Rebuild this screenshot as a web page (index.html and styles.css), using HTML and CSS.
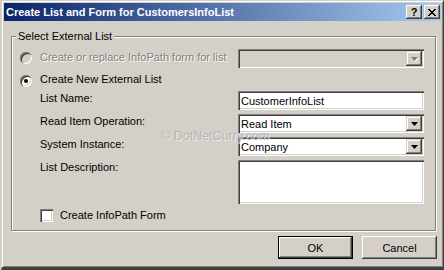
FILE: index.html
```html
<!DOCTYPE html>
<html lang="en">

<head>
    <meta charset="UTF-8">
    <title>Create List and Form for CustomersInfoList</title>
    <link rel="stylesheet" href="styles.css">
</head>

<body>
    <div class="window">
        <div class="titlebar">
            <span class="title">Create List and Form for CustomersInfoList</span>
            <div class="caption-buttons">
                <span class="cap-btn">?</span>
                <span class="cap-btn">
                    <svg width="8" height="7" viewBox="0 0 8 7" shape-rendering="crispEdges">
                        <path d="M0 0h2v1h-2zM6 0h2v1h-2zM1 1h2v1h-2zM5 1h2v1h-2zM2 2h4v1h-4zM3 3h2v1h-2zM2 4h4v1h-4zM1 5h2v1h-2zM5 5h2v1h-2zM0 6h2v1h-2zM6 6h2v1h-2z" fill="#000"/>
                    </svg>
                </span>
            </div>
        </div>

        <div class="content">
            <fieldset class="group">
                <legend>Select External List</legend>
                <div class="form">
                    <span class="radio disabled"></span>
                    <span class="label disabled-text first">Create or replace InfoPath form for list</span>
                    <div class="field combo readonly">
                        <span class="value"></span>
                        <span class="drop disabled-arrow"><svg width="7" height="4" viewBox="0 0 7 4"><path d="M0 0h7L3.5 4z" fill="#808080"/></svg></span>
                    </div>

                    <span class="radio checked"></span>
                    <span class="label wide">Create New External List</span>

                    <span></span>
                    <span class="label">List Name:</span>
                    <div class="field"><span class="value">CustomerInfoList</span></div>

                    <span></span>
                    <span class="label">Read Item Operation:</span>
                    <div class="field combo">
                        <span class="value">Read Item</span>
                        <span class="drop"><svg width="7" height="4" viewBox="0 0 7 4"><path d="M0 0h7L3.5 4z" fill="#000"/></svg></span>
                    </div>

                    <span></span>
                    <span class="label">System Instance:</span>
                    <div class="field combo">
                        <span class="value">Company</span>
                        <span class="drop"><svg width="7" height="4" viewBox="0 0 7 4"><path d="M0 0h7L3.5 4z" fill="#000"/></svg></span>
                    </div>

                    <span></span>
                    <span class="label">List Description:</span>
                    <div class="field"></div>

                    <span></span>
                    <label class="check-row"><span class="checkbox"></span>Create InfoPath Form</label>
                </div>
            </fieldset>

            <div class="actions">
                <button class="btn default">OK</button>
                <button class="btn">Cancel</button>
            </div>
        </div>

        <div class="watermark">© DotNetCurry.com</div>
    </div>
</body>

</html>
```

FILE: styles.css
```css
html, body {
    margin: 0;
    padding: 0;
}
body {
    width: 444px;
    height: 270px;
    overflow: hidden;
    background-color: #d4d0c8;
    font-family: "Liberation Sans", Arial, sans-serif;
    font-size: 11px;
    color: #000;
}
.window {
    position: relative;
    box-sizing: border-box;
    width: 443px;
    height: 270px;
    margin-left: 1px;
    padding: 2px 2px 0 2px;
    border-top: 1px solid #d4d0c8;
    border-left: 1px solid #d4d0c8;
    border-right: 1px solid #404040;
    border-bottom: 3px solid #404040;
    box-shadow: inset 1px 1px 0 #fff, inset -1px -1px 0 #808080;
    background-color: #d4d0c8;
}
.titlebar {
    display: flex;
    align-items: center;
    justify-content: space-between;
    height: 18px;
    padding: 0 1px 0 2px;
    background: linear-gradient(90deg, #0a246a, #a6caf0);
}
.title {
    color: #fff;
    font-weight: bold;
    line-height: 18px;
}
.caption-buttons {
    display: flex;
    gap: 2px;
}
.cap-btn {
    display: flex;
    align-items: center;
    justify-content: center;
    box-sizing: border-box;
    width: 16px;
    height: 14px;
    background-color: #d4d0c8;
    box-shadow: inset -1px -1px 0 #404040, inset 1px 1px 0 #fff, inset -2px -2px 0 #808080, inset 2px 2px 0 #d4d0c8;
    font-weight: bold;
    font-size: 11px;
    line-height: 14px;
}
.content {
    padding: 8px 4px 0 7px;
}
.group {
    margin: 0 1px 0 0;
    padding: 0;
    min-width: 0;
    border: 1px solid #808080;
    box-shadow: 1px 1px 0 #fff, inset 1px 1px 0 #fff;
}
.group legend {
    margin-left: 4px;
    padding: 0 2px;
    line-height: 14px;
    background-color: #d4d0c8;
}
.form {
    display: grid;
    grid-template-columns: 20px 198px 186px;
    grid-template-rows: 19px 15px 19px 19px 19px 44px 14px;
    row-gap: 4px;
    padding: 6px 10px 8px 8px;
}
.label {
    line-height: 14px;
    white-space: nowrap;
}
.label.first {
    margin-top: 1px;
}
.label.wide {
    grid-column: 2 / 4;
}
.disabled-text {
    color: #808080;
    text-shadow: 1px 1px 0 #fff;
}
.radio {
    position: relative;
    width: 12px;
    height: 12px;
    margin-top: 3px;
    border-radius: 50%;
    background-color: #fff;
    box-shadow: inset 1px 1px 0 #808080, inset 2px 2px 0 #404040, inset -1px -1px 0 #fff, inset -2px -2px 0 #d4d0c8;
}
.radio.disabled {
    background-color: #d4d0c8;
}
.radio.checked::after {
    content: "";
    position: absolute;
    left: 4px;
    top: 4px;
    width: 4px;
    height: 4px;
    border-radius: 50%;
    background-color: #000;
}
.field {
    display: flex;
    align-items: center;
    box-sizing: border-box;
    padding: 2px;
    background-color: #fff;
    box-shadow: inset 1px 1px 0 #808080, inset 2px 2px 0 #404040, inset -1px -1px 0 #fff, inset -2px -2px 0 #d4d0c8;
}
.field.readonly {
    background-color: #d4d0c8;
}
.field .value {
    flex: 1;
    padding: 2px 0 0 1px;
    line-height: 13px;
    white-space: nowrap;
}
.drop {
    display: flex;
    align-items: center;
    justify-content: center;
    width: 16px;
    height: 15px;
    background-color: #d4d0c8;
    box-shadow: inset -1px -1px 0 #404040, inset 1px 1px 0 #d4d0c8, inset -2px -2px 0 #808080, inset 2px 2px 0 #fff;
}
.disabled-arrow svg {
    filter: drop-shadow(1px 1px 0 #fff);
}
.check-row {
    display: flex;
    align-items: center;
    gap: 7px;
    line-height: 14px;
    white-space: nowrap;
}
.checkbox {
    box-sizing: border-box;
    width: 13px;
    height: 13px;
    margin-top: 1px;
    background-color: #fff;
    box-shadow: inset 1px 1px 0 #808080, inset 2px 2px 0 #404040, inset -1px -1px 0 #fff, inset -2px -2px 0 #d4d0c8;
}
.actions {
    display: flex;
    justify-content: flex-end;
    gap: 9px;
    margin-top: 5px;
}
.btn {
    box-sizing: border-box;
    width: 75px;
    height: 23px;
    padding: 0;
    border: none;
    background-color: #d4d0c8;
    font-family: "Liberation Sans", Arial, sans-serif;
    font-size: 11px;
    color: #000;
    box-shadow: inset -1px -1px 0 #404040, inset 1px 1px 0 #fff, inset -2px -2px 0 #808080, inset 2px 2px 0 #d4d0c8;
}
.btn.default {
    border: 1px solid #000;
}
.watermark {
    position: absolute;
    left: 159px;
    top: 132px;
    font-size: 12.5px;
    line-height: 7px;
    color: #b4b4b4;
    text-shadow: 1px 1px 0 rgba(255, 255, 255, 0.6);
    pointer-events: none;
}
```
